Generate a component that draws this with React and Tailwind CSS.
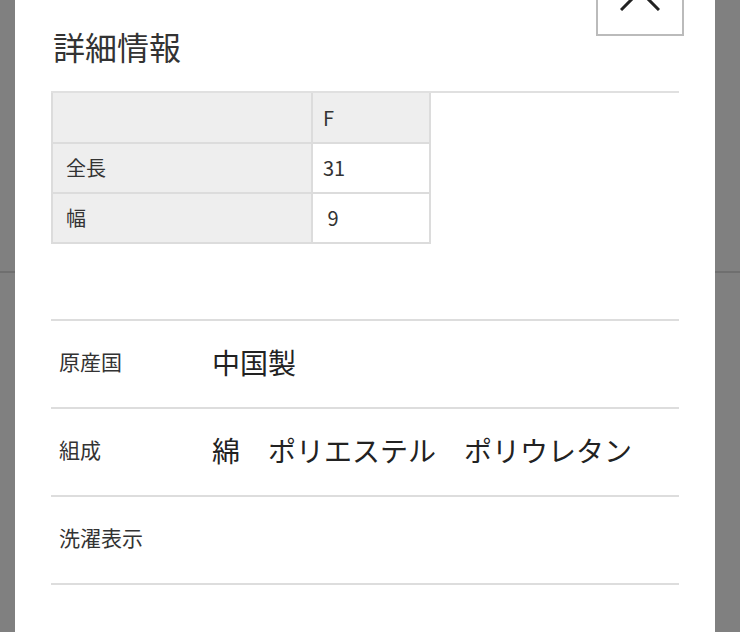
import React from "react";

const jp = { fontFamily: '"Noto Sans CJK JP", "Noto Sans", sans-serif' };

const sizes = [
  { label: "全長", value: "31" },
  { label: "幅", value: " 9" },
];

const details = [
  { label: "原産国", value: "中国製" },
  { label: "組成", value: "綿　ポリエステル　ポリウレタン" },
  { label: "洗濯表示", value: "" },
];

const App = () => {
  return (
    <div className="relative h-[632px] overflow-hidden bg-[#808080]" style={jp}>
      <div className="absolute left-0 right-0 top-[271px] h-[2px] bg-[#6f6f6f]" />
      <div className="relative ml-[15px] h-full w-[700px] bg-white px-[36px] pt-[22px]">
        <button className="absolute right-[31px] top-[-54px] flex h-[90px] w-[88px] items-center justify-center border-2 border-[#bbbbbb] bg-white">
          <svg width="40" height="40" viewBox="0 0 40 40" className="text-[#222]">
            <path d="M1 1 L39 39 M39 1 L1 39" stroke="currentColor" strokeWidth="3" fill="none" />
          </svg>
        </button>

        <h2 className="pl-[2px] text-[32px] leading-[48px] text-[#333]">詳細情報</h2>

        <div className="mt-[21px] border-t-2 border-[#e0e0e0]">
          <table className="border-collapse text-[20px] text-[#333]">
            <tbody>
              <tr className="h-[50px]">
                <td className="w-[260px] border-2 border-t-0 border-[#dcdcdc] bg-[#eeeeee]" />
                <td className="w-[118px] border-2 border-t-0 border-[#dcdcdc] bg-[#eeeeee] px-[10px]">F</td>
              </tr>
              {sizes.map((s) => (
                <tr key={s.label} className="h-[50px]">
                  <td className="border-2 border-[#dcdcdc] bg-[#eeeeee] px-[13px]">{s.label}</td>
                  <td className="whitespace-pre border-2 border-[#dcdcdc] px-[10px]">{s.value}</td>
                </tr>
              ))}
            </tbody>
          </table>
        </div>

        <div className="mt-[75px] border-t-2 border-[#dddddd]">
          {details.map((d) => (
            <div key={d.label} className="flex h-[88px] items-center border-b-2 border-[#dddddd] pb-[4px] text-[#333]">
              <div className="w-[161px] pl-[8px] text-[21px]">{d.label}</div>
              <div className="text-[28px] text-[#222]">{d.value}</div>
            </div>
          ))}
        </div>
      </div>
    </div>
  );
};

export default App;
